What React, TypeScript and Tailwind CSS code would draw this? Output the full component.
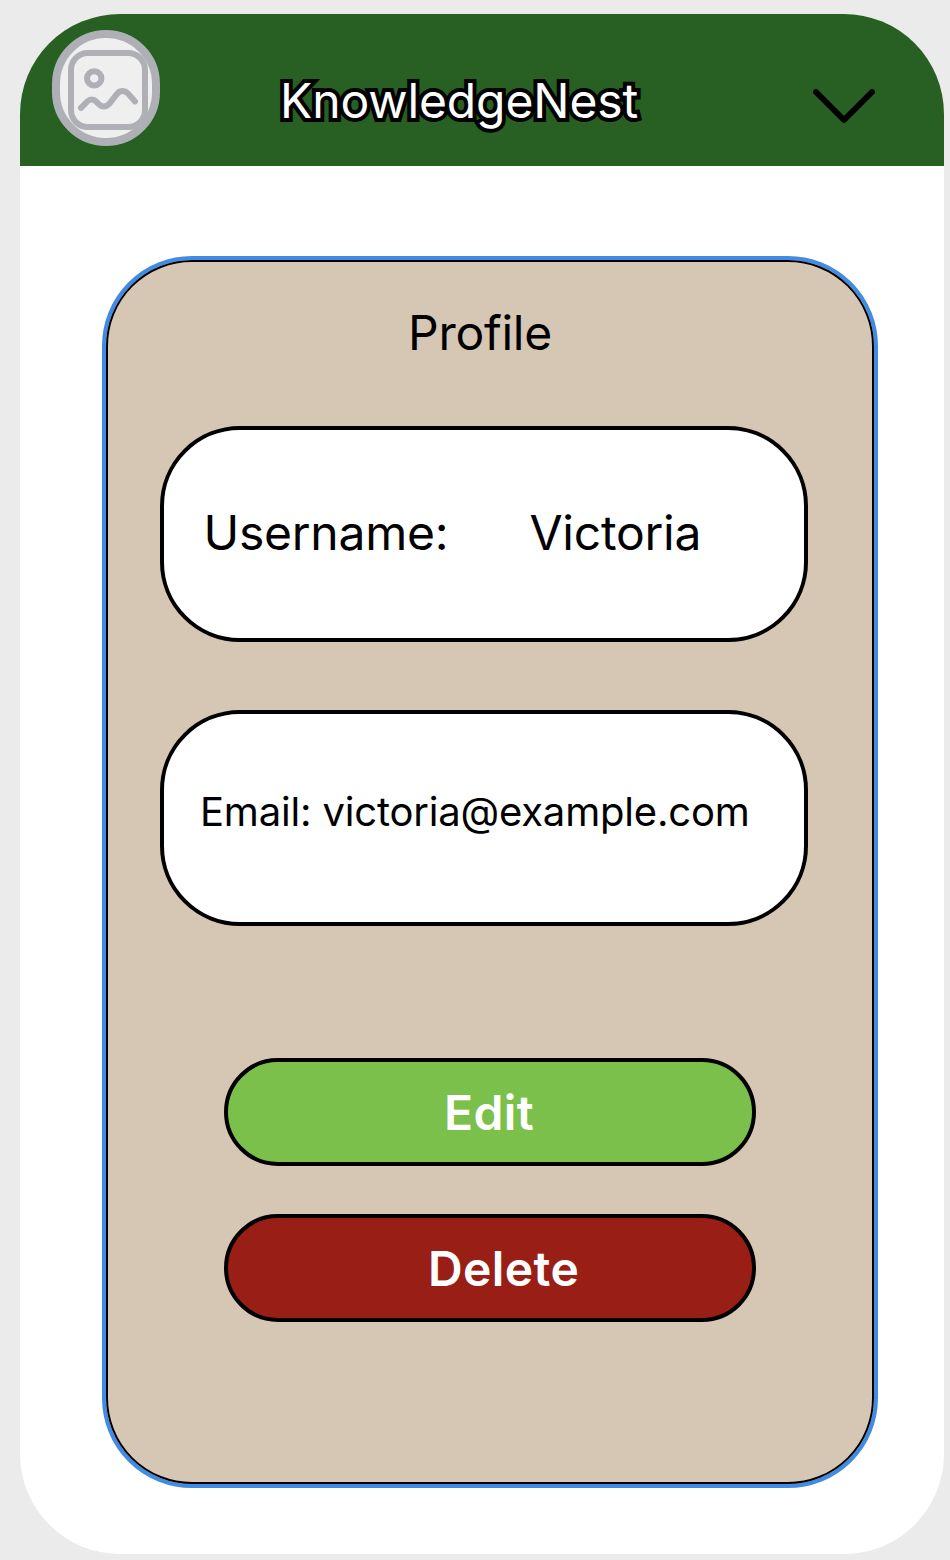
function AvatarPlaceholder() {
  return (
    <div className="ml-8 mt-4 h-[116px] w-[108px] shrink-0 rounded-full border-8 border-[#afb0b6] bg-[#efeff0]">
      <svg
        className="ml-2 mt-3 block h-20 w-20 overflow-visible"
        viewBox="0 0 80 80"
        fill="none"
        stroke="#afb0b6"
        strokeWidth="6"
        strokeLinecap="round"
        strokeLinejoin="round"
      >
        <rect x="3" y="3" width="74" height="74" rx="17" />
        <circle cx="26.2" cy="28.4" r="7.2" />
        <path d="M13 57.8L19.4 51.4C22 48.8 25.5 48.8 28 51.4L31 54.4C33.8 57.2 38 57.2 41 54.2L49 43.8C52 40 56.5 40 60 43.5L67 51.4" />
      </svg>
    </div>
  );
}

function Header() {
  return (
    <header className="flex h-[152px] shrink-0 items-start bg-[#286023]">
      <AvatarPlaceholder />
      <h1 className="ml-[120px] mt-[58px] w-[533px] whitespace-nowrap text-[48px] leading-[58px] tracking-[-0.1px] text-white [-webkit-text-stroke:8px_black] [paint-order:stroke_fill]">
        KnowledgeNest
      </h1>
      <button type="button" aria-label="Open menu" className="mt-[75px]">
        <svg
          className="block h-[34px] w-[62px]"
          viewBox="0 0 62 34"
          fill="none"
          stroke="black"
          strokeWidth="6"
          strokeLinecap="round"
          strokeLinejoin="round"
        >
          <path d="M3 3L31 31L59 3" />
        </svg>
      </button>
    </header>
  );
}

export default function App() {
  return (
    <div className="h-[1560px] w-[950px] overflow-hidden bg-[#ebebeb] pl-5 pt-3.5 font-['Inter',sans-serif] text-black">
      <main className="flex h-[1540px] w-[924px] flex-col overflow-hidden rounded-[100px] bg-white">
        <Header />
        <section className="ml-[82px] mt-[90px] h-[1232px] w-[776px] rounded-[90px] border-4 border-[#428be5]">
          <div className="flex h-full flex-col rounded-[86px] border-2 border-black bg-[#d6c7b4]">
            <h2 className="ml-[300px] mt-[42px] text-[48px] leading-[58px] tracking-[-0.25px]">Profile</h2>
            <div className="ml-[52px] mt-[64px] flex h-[216px] w-[648px] rounded-[80px] border-4 border-black bg-white pt-[74px] text-[48px] leading-[58px] tracking-[-0.25px]">
              <span className="ml-[39.5px] w-[326px]">Username:</span>
              <span>Victoria</span>
            </div>
            <div className="ml-[52px] mt-[68px] h-[216px] w-[648px] whitespace-nowrap rounded-[80px] border-4 border-black bg-white pl-[36px] pt-[74px] text-[40px] leading-[48px] tracking-[-0.18px]">
              Email: victoria@example.com
            </div>
            <button
              type="button"
              className="ml-[116px] mt-[132px] flex h-[108px] w-[532px] rounded-full border-4 border-black bg-[#7bc04b] pl-[216px] pt-[22px] text-[48px] font-semibold leading-[58px] tracking-[0.4px] text-white"
            >
              Edit
            </button>
            <button
              type="button"
              className="ml-[116px] mt-12 flex h-[108px] w-[532px] rounded-full border-4 border-black bg-[#991e15] pl-[200px] pt-[22px] text-[48px] font-semibold leading-[58px] tracking-[0.4px] text-white"
            >
              Delete
            </button>
          </div>
        </section>
      </main>
    </div>
  );
}
